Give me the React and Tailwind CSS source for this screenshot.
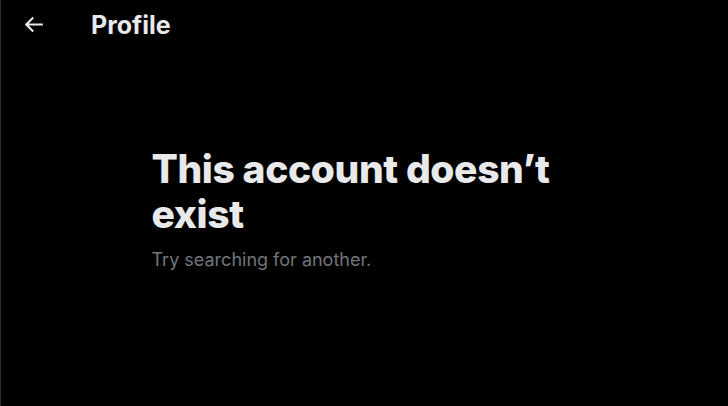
export default function App() {
  return (
    <div
      className="min-h-[406px] w-full bg-black text-[#e7e9ea] border-l border-[#2f3336]"
      style={{ fontFamily: "Inter, 'Noto Sans', sans-serif" }}
    >
      <header className="h-[49px] flex items-center">
        <div className="w-[90px] flex items-center pl-[20px]">
          <svg viewBox="0 0 24 24" width="25" height="25" fill="currentColor">
            <path d="M7.414 13l5.043 5.04-1.414 1.42L3.586 12l7.457-7.46 1.414 1.42L7.414 11H21v2H7.414z" />
          </svg>
        </div>
        <h2 className="text-[25px] font-bold leading-[30px]">Profile</h2>
      </header>

      <div className="w-full max-w-[426px] mx-auto pt-[97px]">
        <h1 className="text-[39px] leading-[45px] font-extrabold tracking-[-0.4px]">
          This account doesn’t exist
        </h1>
        <p className="mt-[11px] text-[18px] leading-[25px] text-[#71767b]">
          Try searching for another.
        </p>
      </div>
    </div>
  );
}
